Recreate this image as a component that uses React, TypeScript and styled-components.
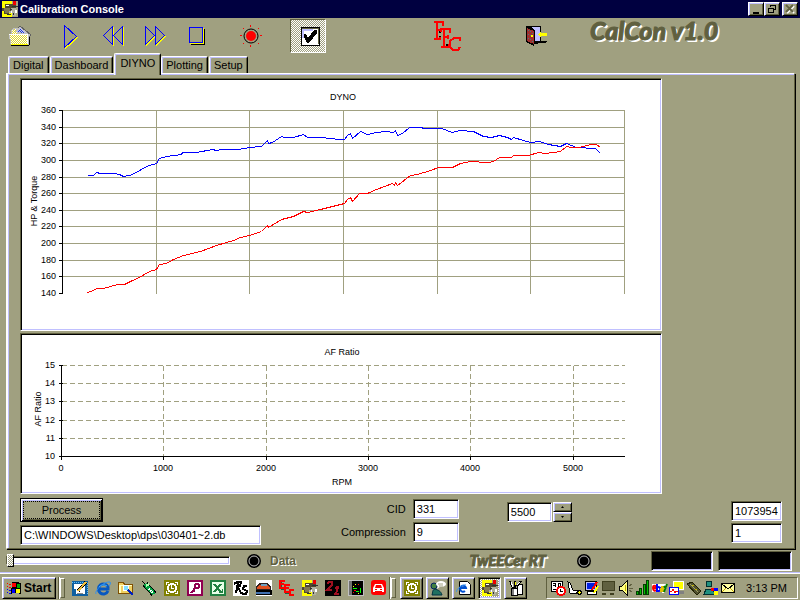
import React, { useState } from 'react';
import styled, { createGlobalStyle, css } from 'styled-components';

const face = '#a0a080';
const light = '#c0c0ff';
const shadow = '#606040';
const navy = '#000040';

const GlobalStyle = createGlobalStyle`
  * {
    box-sizing: border-box;
  }

  body {
    margin: 0;
    background: ${face};
    color: #000;
    font-family: "Liberation Sans", Arial, sans-serif;
    font-size: 11px;
  }

  button, input {
    font: inherit;
    color: inherit;
  }
`;

const raised = css`
  background: ${face};
  border: 1px solid;
  border-color: #fff #000 #000 #fff;
  box-shadow: inset 1px 1px 0 ${light}, inset -1px -1px 0 ${shadow};
`;

const sunken = css`
  border: 1px solid;
  border-color: ${shadow} #fff #fff ${shadow};
  box-shadow: inset 1px 1px 0 #000, inset -1px -1px 0 ${light};
`;

const dither = css`
  background: conic-gradient(#fff 25%, ${face} 0 50%, #fff 0 75%, ${face} 0) 0 0 / 2px 2px;
`;

const Window = styled.div`
  display: flex;
  flex-direction: column;
  min-height: 100vh;
`;

const TitleBar = styled.header`
  display: flex;
  align-items: center;
  height: 18px;
  padding: 0 2px;
  background: ${navy};
  color: #fff;
`;

const Title = styled.h1`
  flex: 1;
  margin: 0 0 0 2px;
  font-size: 11px;
  font-weight: bold;
`;

const CaptionButton = styled.button<{ $gap?: boolean }>`
  ${raised}
  display: flex;
  width: 16px;
  height: 14px;
  padding: 1px;
  margin-left: ${props => (props.$gap ? '2px' : '0')};
`;

const Toolbar = styled.div`
  display: flex;
  align-items: center;
  height: 36px;
`;

const ToolButton = styled.button<{ $gap?: number }>`
  display: flex;
  align-items: center;
  justify-content: center;
  width: 42px;
  height: 34px;
  padding: 0;
  margin-left: ${props => props.$gap || 0}px;
  background: none;
  border: none;
`;

const OpenButton = styled(ToolButton)`
  width: 40px;
`;

const ToggleButton = styled(ToolButton)`
  width: 36px;
  padding-left: 4px;
  border: 1px solid;
  border-color: ${shadow} #fff #fff ${shadow};
  ${dither}
`;

const Logo = styled.div<{ $size: number }>`
  color: ${shadow};
  font-family: Lato, "Liberation Sans", sans-serif;
  font-size: ${props => props.$size}px;
  font-weight: 900;
  font-style: italic;
  line-height: 1;
  white-space: nowrap;
  text-shadow: 1px 1px 0 #fff, 2px 2px 0 #fff;
  -webkit-text-stroke: 1px ${shadow};
`;

const AppLogo = styled(Logo)`
  align-self: flex-start;
  margin-left: 32px;
`;

const Tabs = styled.div`
  display: flex;
  align-items: flex-end;
  height: 19px;
  padding-left: 8px;
`;

const Tab = styled.button<{ $active: boolean }>`
  height: 17px;
  padding: 0 4px;
  margin-right: 1px;
  background: ${face};
  border: solid;
  border-width: 1px 1px 0 1px;
  border-color: #fff #000 #000 #fff;
  border-radius: 2px 2px 0 0;
  box-shadow: inset 1px 1px 0 ${light}, inset -1px 0 0 ${shadow};

  ${props => props.$active && css`
    height: 22px;
    padding: 0 5px 4px;
    margin: 0 0 -2px;
    z-index: 1;
  `}
`;

const TabPanel = styled.main`
  flex: 1;
  margin: 0 5px 0 6px;
  padding: 4px 12px 2px 12px;
  border: 2px solid;
  border-color: #fff ${shadow} ${shadow} #fff;
  border-width: 1px 1px 1px 2px;
  box-shadow: inset 1px 1px 0 ${light}, 1px 1px 0 #000;
`;

const Charts = styled.div`
  display: flex;
  flex-direction: column;
  gap: 2px;
  margin-right: 120px;
`;

const ChartFrame = styled.figure`
  ${sunken}
  margin: 0;
  padding: 1px;
  background: #fff;
`;

const ChartSvg = styled.svg`
  display: block;
  width: 100%;
  height: auto;
  font-size: 9px;
`;

const Controls = styled.div`
  display: flex;
  align-items: flex-start;
  margin-top: 4px;
`;

const FileColumn = styled.div`
  display: flex;
  flex-direction: column;
  align-items: flex-start;
  gap: 3px;
  width: 241px;
`;

const ProcessButton = styled.button`
  width: 83px;
  height: 24px;
  padding: 2px;
  background: ${face};
  border: 1px solid #000;
  box-shadow: inset 1px 1px 0 #fff, inset -1px -1px 0 #000, inset 2px 2px 0 ${light}, inset -2px -2px 0 ${shadow};

  span {
    display: block;
    border: 1px dotted #000;
    line-height: 16px;
  }
`;

const Field = styled.input<{ $width: string }>`
  ${sunken}
  width: ${props => props.$width};
  height: 20px;
  padding: 0 3px;
  background: #fff;
  outline: none;
`;

const EngineForm = styled.div`
  display: grid;
  grid-template-columns: auto 46px;
  align-items: center;
  gap: 3px 7px;
  margin: 1px 0 0 80px;
  text-align: right;
`;

const SpinBox = styled.div`
  display: flex;
  gap: 1px;
  margin: 4px 0 0 48px;
`;

const SpinButtons = styled.div`
  display: flex;
  flex-direction: column;
`;

const SpinButton = styled.button`
  ${raised}
  display: flex;
  align-items: center;
  justify-content: center;
  width: 19px;
  height: 10px;
  padding: 0;
`;

const Counters = styled.div`
  display: flex;
  flex-direction: column;
  gap: 2px;
  margin: 3px 0 0 auto;
`;

const StatusBar = styled.div`
  display: flex;
  align-items: center;
  height: 23px;
  padding: 0 8px 0 6px;
`;

const Slider = styled.input`
  appearance: none;
  width: 224px;
  height: 13px;
  margin: 0 17px 0 0;
  background: none;

  &::-webkit-slider-runnable-track {
    ${sunken}
    height: 9px;
    background: #fff;
  }

  &::-webkit-slider-thumb {
    appearance: none;
    width: 7px;
    height: 13px;
    margin-top: -3px;
    border: 1px solid;
    border-color: #fff #000 #000 #fff;
    ${dither}
  }
`;

const DataLabel = styled.span`
  margin-left: 9px;
  color: ${shadow};
  font-size: 12px;
  font-weight: bold;
  text-shadow: 1px 1px 0 #fff;
`;

const StatusRight = styled.div`
  display: flex;
  align-items: center;
  margin-left: auto;
`;

const Readout = styled.div<{ $width: number; $gap: number }>`
  ${sunken}
  width: ${props => props.$width}px;
  height: 20px;
  margin-left: ${props => props.$gap}px;
  background: #000;
`;

const Led = styled.svg<{ $gap?: number }>`
  width: 14px;
  height: 14px;
  margin-left: ${props => props.$gap || 0}px;
`;

const TaskBar = styled.footer`
  display: flex;
  align-items: center;
  height: 28px;
  padding: 2px 2px 0;
  border-top: 1px solid ${light};
  box-shadow: inset 0 1px 0 #fff;
`;

const StartButton = styled.button`
  ${raised}
  display: flex;
  align-items: center;
  gap: 2px;
  width: 54px;
  height: 22px;
  padding: 0 3px;
  font-size: 12px;
  font-weight: bold;
`;

const Grip = styled.div<{ $after: number }>`
  display: flex;
  justify-content: flex-end;
  align-items: center;
  width: 7px;
  height: 22px;
  margin: 0 ${props => props.$after}px 0 2px;
  border-left: 1px solid ${shadow};
  box-shadow: inset 1px 0 0 #fff;

  &::after {
    content: "";
    width: 3px;
    height: 18px;
    border: 1px solid;
    border-color: #fff ${shadow} ${shadow} #fff;
    background: ${face};
  }
`;

const IconRow = styled.div<{ $gap: number }>`
  display: flex;
  align-items: center;
  gap: ${props => props.$gap}px;
`;

const LaunchButton = styled.button`
  display: flex;
  width: 16px;
  height: 16px;
  padding: 0;
  background: none;
  border: none;
`;

const TaskButton = styled.button<{ $active?: boolean }>`
  ${raised}
  display: flex;
  align-items: center;
  justify-content: center;
  width: 23px;
  height: 22px;
  padding: 0;
  ${props => props.$active && css`
    ${sunken}
    ${dither}
  `}
`;

const Tray = styled.div`
  display: flex;
  align-items: center;
  justify-content: space-between;
  min-width: 252px;
  height: 22px;
  margin-left: auto;
  padding: 0 10px 0 3px;
  border: 1px solid;
  border-color: ${shadow} #fff #fff ${shadow};
`;

const Clock = styled.time`
  font-size: 11px;
  white-space: nowrap;
`;

// ---- icons ----

const Pix = ({ size = 16, children }: { size?: number; children: React.ReactNode }) => (
  <svg width={size} height={size} viewBox="0 0 16 16" shapeRendering="crispEdges" aria-hidden="true">
    {children}
  </svg>
);

const EngineIcon = () => (
  <Pix>
    <path fill="#ff0" d="M0 0h16v16H0z" />
    <path fill={face} d="M10 0h6v16h-6z" />
    <path fill="#504830" d="M3 3h8v1h3v4h-4v3H7v2H2v-3H0V7h3z" />
    <path fill="#807850" d="M2 7h6v5H3z" />
    <path fill="#b0b0a0" d="M9 7h5v8h-4v-3H7v-2h2z" />
    <path fill="#e00" d="M11 0h3v4h-3z" />
    <path fill="#fff" d="M4 4h3v1H4zM13 9h2v3h-2zM9 10h1v2H9z" />
    <path fill="#303030" d="M10 5h6v1h-6zM5 13h4v1H5zM8 8h2v1H8zM11 12h1v2h-1z" />
  </Pix>
);

const FolderIcon = () => (
  <svg width="24" height="22" viewBox="0 0 24 22" shapeRendering="crispEdges">
    <defs>
      <pattern id="folderFill" width="2" height="2" patternUnits="userSpaceOnUse">
        <path fill="#fff" d="M0 0h2v2H0z" />
        <path fill="#e0d830" d="M0 0h1v1H0zM1 1h1v1H1z" />
      </pattern>
      <pattern id="paperFill" width="2" height="2" patternUnits="userSpaceOnUse">
        <path fill="#c0c0ff" d="M0 0h2v2H0z" />
        <path fill="#2040c0" d="M0 0h1v1H0zM1 1h1v1H1z" />
      </pattern>
    </defs>
    <path fill="#000" d="M3 20h18v1H3zM20 12h2v8h-2z" />
    <path fill="#c0c0c0" stroke="#606060" d="M5 8l7-7 11 9-3 3z" />
    <path fill="url(#folderFill)" stroke="#c0c0c0" d="M3 6l4-3h3l-2 3h1v3h11v10H3L1 9h2z" />
    <path fill="url(#paperFill)" d="M8 7l4-4 5 5z" />
    <path stroke="#fff" fill="none" d="M1 9h18l1 10" />
    <path fill="#ff0" d="M3 19h17v1H3z" />
  </svg>
);

const Triangles = ({ points }: { points: string[] }) => (
  <svg width="26" height="26" viewBox="0 0 26 26" fill="none" shapeRendering="crispEdges">
    {points.map(p => (
      <g key={p}>
        <polygon points={p} fill="#ff0" stroke="#ff0" transform="translate(1.5 1.5)" />
        <polygon points={p} stroke="#00f" fill={face} transform="translate(0.5 0.5)" />
      </g>
    ))}
  </svg>
);

const StopIcon = () => (
  <svg width="18" height="20" viewBox="0 0 18 20" shapeRendering="crispEdges">
    <path fill="#000" d="M3 18h14v1H3zM16 3h1v16h-1z" />
    <path fill="#ff0" d="M2 17h14v1H2zM15 2h1v16h-1z" />
    <rect x="1.5" y="1.5" width="13" height="15" fill={face} stroke="#00f" />
  </svg>
);

const RecordIcon = () => (
  <svg width="24" height="24" viewBox="0 0 24 24">
    <circle cx="12" cy="12" r="7" fill="none" stroke="#000" strokeWidth="1" />
    <circle cx="12" cy="12" r="5" fill="#f00" />
    <path stroke="#f00" fill="none" shapeRendering="crispEdges" d="M11.500 1v2M11.500 21v2M1 11.500h2M21 11.500h2M4 4l1 1M19 19l1 1M4 20l1-1M19 5l1-1" />
  </svg>
);

const CheckIcon = () => (
  <svg width="20" height="20" viewBox="0 0 20 20" shapeRendering="crispEdges">
    <rect x="1" y="1" width="18" height="18" fill="#fff" stroke="#000" />
    <path fill="none" stroke={shadow} d="M2 2h16v16" />
    <path fill="none" stroke={light} strokeWidth="2" d="M3 12V4h10" />
    <path fill="#000" d="M4 8l3 1 1 3 6-8h3v3l-8 10H7L4 11z" />
  </svg>
);

// three stepped serif letters, drawn as strokes
const EecIcon = ({ size }: { size: number }) => (
  <svg width={size} height={size} viewBox="0 0 30 30" shapeRendering="crispEdges" aria-label="EEC">
    <g fill="none" stroke="#000" strokeWidth="2">
      <path d="M8 10v2M8 15v3M15 23v3" />
    </g>
    <g fill="none" stroke="#f00" strokeWidth="2">
      <path d="M2 1h9v4M5 1v17M2 18h6v-2M5 9h4M9 7v4" />
      <path d="M9 8h9v4M12 8v18M9 26h8v-3M12 16h4M16 14v4" />
      <path d="M28 20v-3h-6l-4 3v6l3 3h5l2-3" />
    </g>
  </svg>
);

const DoorIcon = () => (
  <svg width="23" height="22" viewBox="0 0 23 22" shapeRendering="crispEdges">
    <path fill="#000" d="M0 1h15v15h7l-3 2h-7v1H8v2L0 17z" />
    <path fill={light} d="M5 2h9v14H9V5z" />
    <path fill="#a03030" d="M1 3l7 3v13l-7-3z" />
    <path fill="#408080" d="M2 5h1v1H2zM4 6h1v1H4zM6 8h1v1H6zM2 9h1v1H2zM4 10h1v1H4zM2 13h1v1H2zM4 14h1v1H4zM6 16h1v1H6z" />
    <path fill="#ff0" d="M5 10h2v2H5zM12 9l3-3v2h6v3h-6v2z" />
  </svg>
);

const WindowsFlag = () => (
  <Pix>
    <path fill="#000" d="M6 2h4l5 1v11l-5-1H6L5 14z" />
    <path fill="#f00" d="M6 3h4v4H6zM1 3h1v1H1zM3 4h2v1H3zM1 6h1v1H1zM3 7h2v1H3z" />
    <path fill="#0a0" d="M11 4h3v4h-3z" />
    <path fill="#00f" d="M6 9h3v4H6zM1 9h1v1H1zM3 10h2v1H3zM1 12h1v1H1zM3 13h2v1H3z" />
    <path fill="#ff0" d="M10 9h4v4h-4z" />
  </Pix>
);

const DesktopIcon = () => (
  <Pix>
    <path fill="#1060a0" d="M0 1h16v15H0z" />
    <path fill="#fff" d="M2 4h8v2h3v8H4V9H2z" />
    <path stroke="#60c0ff" strokeDasharray="1 1" fill="none" d="M0 2h15v13" />
    <path stroke="#000" strokeWidth="3" d="M6 11l8-9" />
    <path stroke="#f0c040" strokeWidth="2" d="M6 11l8-9" />
    <path stroke="#888" d="M5 13h6" />
  </Pix>
);

const IeIcon = () => (
  <svg width="16" height="16" viewBox="0 0 16 16" fill="none">
    <path stroke="#0858c0" strokeWidth="3" d="M13 11a5 5 0 1 1 0-4v2H4" />
    <path stroke="#40b0ff" d="M4 7a5 4 0 0 1 8-1" />
    <path stroke="#3090f0" d="M1 14C-1 11 9 1 15 2c1 1 0 3-1 4" />
  </svg>
);

const FindIcon = () => (
  <Pix>
    <path fill="#f0d060" stroke="#805000" d="M0.500 2.500h5l1 2h8v9h-14z" />
    <path fill="#ffffc0" d="M1 5h13v1H1zM1 6h2v7H1z" />
    <circle cx="8" cy="8" r="3" fill="#80e0ff" stroke="#fff" />
    <path stroke="#0020c0" strokeWidth="2" d="M10 10l5 5" />
  </Pix>
);

const PhoneIcon = () => (
  <Pix>
    <path stroke="#000" strokeWidth="6" d="M4 4l9 10" />
    <path stroke="#00a040" strokeWidth="4" d="M4 4l9 10" />
    <path stroke="#000" d="M1 1l3 3" />
    <path stroke="#b0ffb0" strokeWidth="2" d="M5 6l3-2" />
    <path stroke="#fff" strokeDasharray="1 1" strokeWidth="2" d="M8 9l4 4" />
  </Pix>
);

const OutlookIcon = () => (
  <Pix>
    <path fill="#808000" d="M0 0h16v16H0z" />
    <path stroke="#fff" fill="none" d="M2.500 5V2.500H5M11 2.500h2.500V5M13.500 11v2.500H11M5 13.500H2.500V11" />
    <circle cx="8" cy="8" r="4" fill="none" stroke="#fff" strokeWidth="2" />
    <path stroke="#fff" fill="none" d="M7.500 5v3.500H10" />
  </Pix>
);

const AccessIcon = () => (
  <Pix>
    <path fill="#900050" d="M0 0h16v16H0z" />
    <path fill="#fff" d="M2 2h12v12H2z" />
    <circle cx="10" cy="6" r="2" fill="none" stroke="#900050" strokeWidth="2" />
    <path stroke="#900050" strokeWidth="2" d="M9 7l-5 6M6 10l2 1" />
  </Pix>
);

const ExcelIcon = () => (
  <Pix>
    <path fill="#208040" d="M0 0h16v16H0z" />
    <path fill="#e8ffe8" d="M2 2h12v12H2z" />
    <path stroke="#208040" strokeWidth="2" d="M4 4l7 8M11 4l-7 8" />
    <path stroke="#208040" d="M9 12.500h4M12.500 9v4" />
  </Pix>
);

const RsIcon = () => (
  <Pix>
    <path fill="#fff" d="M0 0h16v16H0z" />
    <path fill="none" stroke="#000" strokeWidth="2" d="M1 4l3-2h4l-1 4H4M5 3L3 13M5 7l3 6h2" />
    <path fill="none" stroke="#000" strokeWidth="2" d="M14 6h-3l-1 3 4 2-1 3H9" />
  </Pix>
);

const CarIcon = () => (
  <Pix>
    <path fill="#fff" d="M0 0h16v16H0z" />
    <path fill="#302020" d="M3 3h9l3 4v3H0V7z" />
    <path fill="#e05020" d="M4 5h7l3 2v2H1V7z" />
    <path fill="#70a0c0" d="M5 4h6v2H5z" />
    <path fill="#000" d="M0 10h16v5H0z" />
    <path fill="#4070b0" d="M0 12h14v2H0z" />
  </Pix>
);

const SmallEecIcon = () => (
  <Pix>
    <path fill="none" stroke="#206040" d="M2.500 2v7h4M6.500 7v6h4M11.500 10v6h4" />
    <path fill="none" stroke="#f00" strokeWidth="2" d="M6 1H1v7h4M1 4h4M11 5H6v7h4M6 8h4M15 10h-4v5h4" />
  </Pix>
);

const TwentyOneIcon = () => (
  <Pix>
    <path fill="#000" d="M0 0h16v16H0z" />
    <path fill="none" stroke="#a01020" strokeWidth="2" d="M2 4l2-2h3v3l-5 5h5M10 8l3-1-2 7M9 14h5" />
  </Pix>
);

const LogicIcon = () => (
  <Pix>
    <path fill="#000" stroke="#c0c0c0" d="M0.500 0.500h15v15h-15z" />
    <path fill="#707070" d="M1 1h3v14H1z" />
    <path fill="#f00" d="M10 4h1v1h-1zM6 10h2v1H6zM5 12h1v1H5z" />
    <path fill="#0f0" d="M5 8h4v1H5zM12 8h1v5h-1zM8 11h3v1H8z" />
    <path fill="#ff0" d="M5 6h1v1H5zM10 13h1v1h-1zM7 4h1v1H7z" />
  </Pix>
);

const RedCarIcon = () => (
  <svg width="16" height="16" viewBox="0 0 16 16">
    <rect width="15" height="15" rx="3" fill="#f00" />
    <path fill="#fff" d="M4 4h7l2 4v4h-2v-1H4v1H2V8z" />
    <path fill="#f00" d="M5 5h5l1 3H4zM4 9h2v1H4zM9 9h2v1H9z" />
  </svg>
);

const MessengerIcon = () => (
  <svg width="16" height="16" viewBox="0 0 16 16">
    <circle cx="4" cy="6" r="3" fill="#408040" stroke="#002060" />
    <path fill="#207060" stroke="#003040" d="M2 15c1-3 0-5 3-6 3 1 6 2 7 6z" />
    <ellipse cx="11" cy="4" rx="5" ry="3" fill="#fff" />
    <path fill="#fff" d="M8 5l-1 4 4-3z" />
    <path stroke="#a0a080" d="M8 4h5M9 6h4" />
  </svg>
);

const IePageIcon = () => (
  <svg width="16" height="16" viewBox="0 0 16 16" fill="none">
    <path fill="#fff" stroke="#000" d="M3.500 1.500h8l3 3v10h-11z" />
    <path stroke="#0050d0" strokeWidth="2" d="M9 11a3 3 0 1 1 1-3H4" />
    <path stroke="#3090f0" d="M0 12c1-3 6-8 10-7" />
  </svg>
);

const PaintIcon = () => (
  <Pix>
    <path fill="#fff" stroke="#000" d="M9.500 4.500h5v10h-5zM3.500 8.500h6v7h-6z" />
    <path fill="#808080" d="M4 9h2v6H4z" />
    <path stroke="#000" strokeWidth="2" d="M5 8L2 1M7 8V1M9 6l4-5" />
    <path stroke="#fff" d="M5 7L3 2M9 5l3-3" />
    <path fill="#ff0" d="M7 2h1v3H7z" />
  </Pix>
);

const ScheduleIcon = () => (
  <Pix>
    <path fill="#fff" stroke="#000" d="M1.500 1.500h11v10h-11z" />
    <path fill="#000" d="M3 3h3v1H3zM3 5h3v1H3zM5 3h1v4H5zM8 3h3v4H8zM3 9h3v1H3z" />
    <path fill="#fff" d="M9 4h1v2H9z" />
    <circle cx="11" cy="11" r="4" fill="#fff" stroke="#f00" strokeWidth="2" />
    <path stroke="#000" fill="none" d="M10.500 9v2.500H13" />
  </Pix>
);

const PlugIcon = () => (
  <Pix>
    <path fill="#fff" stroke="#000" d="M1 2l2 1 3 7 5 1-2 3-6-1z" />
    <path fill="#ff0" stroke="#000" d="M10 12l3-2 2 3-3 2z" />
  </Pix>
);

const MonitorIcon = () => (
  <Pix>
    <path fill="#c0c0ff" stroke="#000" d="M1.500 1.500h11v9h-11z" />
    <path fill="#0020e0" d="M3 3h8v6H3z" />
    <path fill="#fff" stroke="#000" d="M3.500 11.500h9v3h-9z" />
    <path stroke="#f00" strokeWidth="2" d="M13 2l-5 8" />
    <path stroke="#ff0" strokeWidth="2" d="M14 6l-4 7" />
  </Pix>
);

const NetworkIcon = () => (
  <Pix>
    <path fill={shadow} stroke="#404020" d="M1.500 1.500h12v9h-12z" />
    <path fill="#404020" d="M1 13h4v2H1zM9 13h4v2H9z" />
  </Pix>
);

const SpeakerIcon = () => (
  <Pix>
    <path fill="#ffff80" stroke="#000" d="M1 6h3l5-5v14L4 10H1z" />
    <path fill="#c0b000" d="M7 5h1v6H7z" />
    <path stroke={shadow} d="M11 6l3-2M11 8h4M11 10l3 2" />
  </Pix>
);

const SignalIcon = () => (
  <Pix>
    <path fill="#00c000" stroke="#004000" d="M1.500 11.500h2v3h-2zM4.500 8.500h2v6h-2zM8.500 4.500h2v10h-2zM11.500 0.500h2v14h-2z" />
  </Pix>
);

const EbayIcon = () => (
  <svg width="16" height="16" viewBox="0 0 16 16" fill="none" strokeWidth="2">
    <path fill="#fff" d="M0 4h12v8H0zM10 4h5v3l-3 6h-2z" />
    <path stroke="#f00" d="M1 8h3c0-3-3-3-3 0s2 3 3 2" />
    <path stroke="#00f" d="M5 4v7h2c2 0 2-4-1-4" />
    <path stroke="#e0c000" d="M9 7h2v4H9V9h2" />
    <path stroke="#008000" d="M12 6l2 3M15 4l-3 8" />
  </svg>
);

const PulseIcon = () => (
  <Pix>
    <path fill="#ff0" stroke="#fff" d="M4.500 1.500h10v8h-10z" />
    <path fill="#808080" d="M8 11h7v3H8z" />
    <path fill="#fff" stroke="#00f" d="M0.500 7.500h9v7h-9z" />
    <path fill="none" stroke="#f00" d="M1 11h2l1-2 2 4 1-2h2" />
  </Pix>
);

const ModemIcon = () => (
  <Pix>
    <path fill="#505030" stroke="#202000" d="M1 4l5-2 9 9-4 4z" />
    <path stroke="#a0a060" d="M4 4l8 8" />
    <path fill="#c0b000" d="M6 5h2v1H6zM9 9h2v1H9z" />
  </Pix>
);

const MsnIcon = () => (
  <Pix>
    <circle cx="6" cy="4" r="3" fill="#209080" stroke="#003030" />
    <path fill="#209080" stroke="#003030" d="M1 14l2-5h6l3 5z" />
    <path fill="#f00" d="M8 8h3v3H8z" />
    <path fill="#00f" d="M11 8h4v3h-4z" />
    <path fill="#ff0" d="M11 11h4v4h-4z" />
  </Pix>
);

const MailIcon = () => (
  <Pix>
    <path fill="#ffffa0" stroke="#000" d="M1.500 3.500h13v9h-13z" />
    <path fill="none" stroke="#000" d="M2 4l6 5 6-5" />
    <path stroke="#c0a000" d="M2 12l4-4M14 12l-4-4" />
  </Pix>
);

// ---- charts ----

const torque = '87,175 93,175 96,172 100,173 113,173 119,174 123,176 129,175 136,172 144,167 149,165 156,163 159,158 166,156 181,154 182,152 196,152 212,149 216,150 222,149 238,149 249,147 261,146 267,140 268,143 272,142 281,136 284,137 293,137 303,134 307,137 323,137 328,138 340,139 344,139 347,135 350,133 352,138 360,131 367,134 376,132 386,131 393,132 395,130 397,135 402,133 409,127 420,127 424,128 441,128 452,132 459,130 473,131 483,136 491,137 499,135 507,137 511,139 513,137 523,140 530,142 539,141 548,144 560,146 566,143 576,147 595,148 600,153';

const power = '87,292 93,290 96,288 103,288 110,286 117,284 124,284 132,280 137,278 144,274 149,271 156,269 159,264 166,263 173,259 183,255 200,251 216,245 233,240 240,237 249,235 261,231 267,225 268,227 281,219 293,216 303,211 307,212 320,209 340,204 344,203 347,199 350,197 352,201 359,193 367,193 376,189 392,183 394,185 395,182 397,185 410,175 417,174 430,170 438,167 452,167 460,163 470,161 477,161 480,162 488,162 493,161 499,157 511,157 513,155 528,155 538,152 545,153 553,152 560,151 566,146 571,147 578,147 591,144 596,144 600,147';

const dynoRows = [110, 127, 143, 160, 177, 193, 210, 226, 243, 260, 276, 293];
const dynoCols = [156, 249, 343, 437, 530, 624];
const afRows = [365, 383, 401, 420, 438, 456];
const afCols = [61, 163, 266, 368, 470, 573];

const DynoChart = () => (
  <ChartFrame>
    <ChartSvg viewBox="22 80 638 249" role="img" aria-label="DYNO">
      <text x="343" y="100" textAnchor="middle">DYNO</text>
      <text transform="translate(37 201) rotate(-90)" textAnchor="middle">HP &amp; Torque</text>
      {dynoRows.map((y, i) => (
        <text key={y} x="56" y={y + 3} textAnchor="end">{360 - i * 20}</text>
      ))}
      <g shapeRendering="crispEdges">
        {dynoRows.slice(0, -1).map(y => <rect key={y} x="62" y={y} width="563" height="1" fill={face} />)}
        {dynoCols.map(x => <rect key={x} x={x} y="110" width="1" height="184" fill={face} />)}
        {dynoRows.map(y => <rect key={y} x="59" y={y} width="4" height="1" />)}
        <rect x="62" y="110" width="1" height="184" />
        <polyline points={torque} fill="none" stroke="#00f" transform="translate(0.5 0.5)" />
        <polyline points={power} fill="none" stroke="#f00" transform="translate(0.5 0.5)" />
      </g>
    </ChartSvg>
  </ChartFrame>
);

const AfChart = () => (
  <ChartFrame>
    <ChartSvg viewBox="22 335 638 157" role="img" aria-label="AF Ratio">
      <text x="342" y="355" textAnchor="middle">AF Ratio</text>
      <text transform="translate(41 409) rotate(-90)" textAnchor="middle">AF Ratio</text>
      <text x="342" y="485" textAnchor="middle">RPM</text>
      {afRows.map((y, i) => (
        <text key={y} x="55" y={y + 3} textAnchor="end">{15 - i}</text>
      ))}
      {afCols.map((x, i) => (
        <text key={x} x={x} y="471" textAnchor="middle">{i * 1000}</text>
      ))}
      <g shapeRendering="crispEdges" transform="translate(0.5 0.5)">
        <g stroke={face} strokeDasharray="5 3">
          {afRows.slice(0, -1).map(y => <line key={y} x1="61" x2="624" y1={y} y2={y} />)}
          {afCols.slice(1).map(x => <line key={x} x1={x} x2={x} y1="365" y2="456" />)}
        </g>
        <g stroke="#000">
          {afRows.map(y => <line key={y} x1="58" x2="62" y1={y} y2={y} />)}
          {afCols.map(x => <line key={x} x1={x} x2={x} y1="456" y2="459" />)}
          <path fill="none" d="M61 365v91h563" />
        </g>
      </g>
    </ChartSvg>
  </ChartFrame>
);

const StatusLed = ({ gap }: { gap?: number }) => (
  <Led $gap={gap} viewBox="0 0 14 14">
    <circle cx="7" cy="7" r="6" fill="#000" stroke="#000" strokeWidth="2" />
    <circle cx="7" cy="7" r="5" fill="none" stroke="#c0c0c0" />
  </Led>
);

const tabs = ['Digital', 'Dashboard', 'DIYNO', 'Plotting', 'Setup'];

const launchers = [
  { name: 'Show Desktop', icon: <DesktopIcon /> },
  { name: 'Internet Explorer', icon: <IeIcon /> },
  { name: 'Find', icon: <FindIcon /> },
  { name: 'Dialer', icon: <PhoneIcon /> },
  { name: 'Outlook', icon: <OutlookIcon /> },
  { name: 'Access', icon: <AccessIcon /> },
  { name: 'Excel', icon: <ExcelIcon /> },
  { name: 'RS', icon: <RsIcon /> },
  { name: 'Car', icon: <CarIcon /> },
  { name: 'EEC', icon: <SmallEecIcon /> },
  { name: 'Calibration Console', icon: <EngineIcon /> },
  { name: 'Twenty One', icon: <TwentyOneIcon /> },
  { name: 'Logger', icon: <LogicIcon /> },
  { name: 'Garage', icon: <RedCarIcon /> },
];

const tasks = [
  { name: 'Outlook', icon: <OutlookIcon /> },
  { name: 'Messenger', icon: <MessengerIcon /> },
  { name: 'Internet Explorer', icon: <IePageIcon /> },
  { name: 'Calibration Console', icon: <EngineIcon />, active: true },
  { name: 'Paint', icon: <PaintIcon /> },
];

const App: React.FC = () => {
  const [activeTab, setActiveTab] = useState('DIYNO');
  const [checked, setChecked] = useState(true);
  const [rpm, setRpm] = useState(5500);

  return (
    <Window>
      <GlobalStyle />
      <TitleBar>
        <EngineIcon />
        <Title>Calibration Console</Title>
        <CaptionButton aria-label="Minimize">
          <svg width="12" height="10" shapeRendering="crispEdges"><path d="M3 8h6v2H3z" /></svg>
        </CaptionButton>
        <CaptionButton aria-label="Restore">
          <svg width="12" height="10" fill="none" stroke="#000" shapeRendering="crispEdges">
            <path d="M4.500 3V1.500h5v4H8M4 1h6M2.500 4.500h5v4h-5zM2 4h6" />
          </svg>
        </CaptionButton>
        <CaptionButton aria-label="Close" $gap>
          <svg width="12" height="10" fill="none" strokeWidth="2">
            <path stroke="#fff" d="M3 2l7 7M10 2L3 9" />
            <path stroke={shadow} d="M2 1l7 7M9 1L2 8" />
          </svg>
        </CaptionButton>
      </TitleBar>

      <Toolbar>
        <OpenButton aria-label="Open"><FolderIcon /></OpenButton>
        <ToolButton aria-label="Play" $gap={10}><Triangles points={['6,2 18,13 6,24']} /></ToolButton>
        <ToolButton aria-label="Rewind"><Triangles points={['12,3 3,12 12,21', '22,3 13,12 22,21']} /></ToolButton>
        <ToolButton aria-label="Forward"><Triangles points={['3,3 12,12 3,21', '13,3 22,12 13,21']} /></ToolButton>
        <ToolButton aria-label="Stop"><StopIcon /></ToolButton>
        <ToolButton aria-label="Record" $gap={12}><RecordIcon /></ToolButton>
        <ToggleButton aria-label="Enable" aria-pressed={checked} $gap={18} onClick={() => setChecked(!checked)}>
          {checked && <CheckIcon />}
        </ToggleButton>
        <ToolButton aria-label="EEC" $gap={100}><EecIcon size={30} /></ToolButton>
        <ToolButton aria-label="Exit" $gap={48}><DoorIcon /></ToolButton>
        <AppLogo $size={25}>CalCon v1.0</AppLogo>
      </Toolbar>

      <Tabs role="tablist">
        {tabs.map(tab => (
          <Tab key={tab} role="tab" aria-selected={tab === activeTab} $active={tab === activeTab} onClick={() => setActiveTab(tab)}>
            {tab}
          </Tab>
        ))}
      </Tabs>

      <TabPanel>
        <Charts>
          <DynoChart />
          <AfChart />
        </Charts>
        <Controls>
          <FileColumn>
            <ProcessButton><span>Process</span></ProcessButton>
            <Field $width="100%" aria-label="Database file" defaultValue="C:\WINDOWS\Desktop\dps\030401~2.db" />
          </FileColumn>
          <EngineForm>
            <label htmlFor="cid">CID</label>
            <Field id="cid" $width="46px" defaultValue="331" />
            <label htmlFor="compression">Compression</label>
            <Field id="compression" $width="46px" defaultValue="9" />
          </EngineForm>
          <SpinBox>
            <Field $width="45px" aria-label="Max RPM" value={rpm} onChange={e => setRpm(Number(e.target.value) || 0)} />
            <SpinButtons>
              <SpinButton aria-label="Increase" onClick={() => setRpm(rpm + 100)}>
                <svg width="3" height="2"><path d="M0 2l1.500-2L3 2z" /></svg>
              </SpinButton>
              <SpinButton aria-label="Decrease" onClick={() => setRpm(rpm - 100)}>
                <svg width="3" height="2"><path d="M0 0h3L1.500 2z" /></svg>
              </SpinButton>
            </SpinButtons>
          </SpinBox>
          <Counters>
            <Field $width="51px" aria-label="Record count" defaultValue="1073954" />
            <Field $width="51px" aria-label="Record" defaultValue="1" />
          </Counters>
        </Controls>
      </TabPanel>

      <StatusBar>
        <Slider type="range" aria-label="Position" defaultValue={0} />
        <StatusLed />
        <DataLabel>Data</DataLabel>
        <StatusRight>
          <Logo $size={15}>TwEECer RT</Logo>
          <StatusLed gap={31} />
          <Readout $width={62} $gap={60} />
          <Readout $width={74} $gap={5} />
        </StatusRight>
      </StatusBar>

      <TaskBar>
        <StartButton><WindowsFlag />Start</StartButton>
        <Grip $after={7} />
        <IconRow $gap={7}>
          {launchers.map(item => (
            <LaunchButton key={item.name} aria-label={item.name}>{item.icon}</LaunchButton>
          ))}
        </IconRow>
        <Grip $after={4} />
        <IconRow $gap={3}>
          {tasks.map(item => (
            <TaskButton key={item.name} aria-label={item.name} $active={item.active}>{item.icon}</TaskButton>
          ))}
        </IconRow>
        <Tray>
          <IconRow $gap={1}>
            <ScheduleIcon />
            <PlugIcon />
            <MonitorIcon />
            <NetworkIcon />
            <SpeakerIcon />
            <SignalIcon />
            <EbayIcon />
            <PulseIcon />
            <ModemIcon />
            <MsnIcon />
            <MailIcon />
          </IconRow>
          <Clock>3:13 PM</Clock>
        </Tray>
      </TaskBar>
    </Window>
  );
};

export default App;
